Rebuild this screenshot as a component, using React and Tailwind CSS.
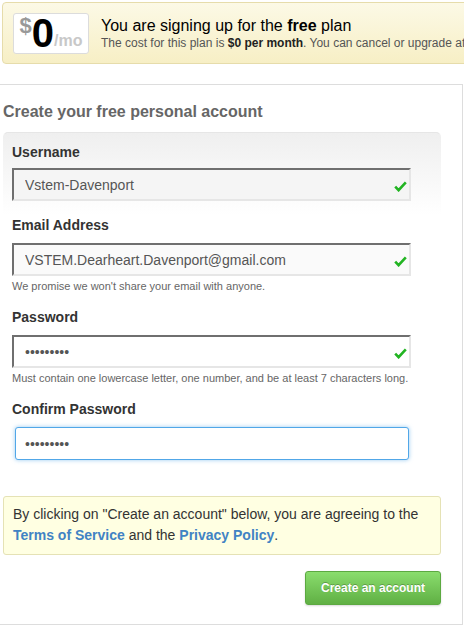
function Check() {
  return (
    <svg
      className="absolute right-[4px] top-[13px]"
      width="13"
      height="11"
      viewBox="0 0 13 11"
    >
      <path
        d="M1.2 5.6 L4.6 9.2 L11.8 1.4"
        fill="none"
        stroke="#22b422"
        strokeWidth="2.6"
        strokeLinejoin="miter"
      />
    </svg>
  );
}

function Field({ label, value, type = "text", hint, bg, className = "" }) {
  return (
    <div className={className}>
      <label className="block text-[14px] font-bold leading-[20px] text-[#333]">
        {label}
      </label>
      <div className="relative mt-[8px] w-[399px]">
        <input
          readOnly
          type={type}
          defaultValue={value}
          className={`block h-[33px] w-full border-2 border-t-[#6f6f6f] border-l-[#6f6f6f] border-r-[#e6e6e6] border-b-[#e6e6e6] ${bg} pl-[11px] text-[14px] text-[#555] outline-none`}
        />
        <Check />
      </div>
      {hint && (
        <p className="mt-[3px] text-[11px] leading-[14px] text-[#666]">{hint}</p>
      )}
    </div>
  );
}

export default function App() {
  return (
    <div className="h-[627px] w-[464px] overflow-hidden bg-white font-['Liberation_Sans',Arial,sans-serif]">
      <div className="ml-[2px] mt-[2px] flex h-[62px] w-[520px] items-center rounded-[4px] border border-[#e6dcab] bg-gradient-to-b from-[#fcf9e6] to-[#f7efc5] pl-[10px]">
        <div className="flex h-[41px] w-[76px] items-end justify-center rounded-[3px] border border-[#dcdcdc] bg-white pb-[4px] font-bold">
          <span className="mb-[12px] text-[22px] leading-none text-[#999]">$</span>
          <span className="text-[40px] leading-[32px] text-black">0</span>
          <span className="text-[16px] leading-none text-[#c8c8c8]">/mo</span>
        </div>
        <div className="ml-[12px]">
          <h2 className="text-[16px] leading-[20px] text-black">
            You are signing up for the <strong>free</strong> plan
          </h2>
          <p className="text-[12px] leading-[15px] text-[#555]">
            The cost for this plan is{" "}
            <strong className="text-[#222]">$0 per month</strong>. You can
            cancel or upgrade at any time.
          </p>
        </div>
      </div>

      <div className="mt-[20px] h-[541px] w-[463px] border-y border-r border-[#ddd] pl-[3px] pt-[17px]">
        <h1 className="text-[16px] font-bold leading-[20px] text-[#666]">
          Create your free personal account
        </h1>

        <div className="mt-[10px] w-[438px] rounded-t-[5px] border-x border-t border-x-transparent border-t-[#e6e6e6] bg-gradient-to-b from-[#efefef] to-white px-[8px] pb-[14px] pt-[9px]">
          <label className="block text-[14px] font-bold leading-[20px] text-[#333]">
            Username
          </label>
          <div className="relative mt-[6px] w-[399px]">
            <input
              readOnly
              defaultValue="Vstem-Davenport"
              className="block h-[33px] w-full border-2 border-t-[#6f6f6f] border-l-[#6f6f6f] border-r-[#e6e6e6] border-b-[#e6e6e6] bg-[#f5f5f5] pl-[11px] text-[14px] text-[#555] outline-none"
            />
            <Check />
          </div>
        </div>

        <div className="pl-[9px]">
          <Field
            label="Email Address"
            value="VSTEM.Dearheart.Davenport@gmail.com"
            bg="bg-[#fafafa]"
            hint="We promise we won't share your email with anyone."
          />
          <Field
            className="mt-[14px]"
            label="Password"
            type="password"
            value="123456789"
            bg="bg-white"
            hint="Must contain one lowercase letter, one number, and be at least 7 characters long."
          />
          <div className="mt-[14px]">
            <label className="block text-[14px] font-bold leading-[20px] text-[#333]">
              Confirm Password
            </label>
            <input
              readOnly
              type="password"
              defaultValue="123456789"
              className="ml-[3px] mt-[8px] block h-[33px] w-[394px] rounded-[3px] border border-[#51a7e8] bg-white pl-[9px] text-[14px] text-[#555] shadow-[0_0_4px_rgba(81,167,232,0.6)] outline-none"
            />
          </div>
        </div>

        <div className="mt-[36px] w-[438px] rounded-[3px] border border-[#e5e2b5] bg-[#ffffe2] px-[9px] pb-[8px] pt-[7px] text-[14px] leading-[21px] text-[#333]">
          By clicking on "Create an account" below, you are agreeing to the{" "}
          <a className="font-bold text-[#4183c4]">Terms of Service</a> and the{" "}
          <a className="font-bold text-[#4183c4]">Privacy Policy</a>.
        </div>

        <div className="mt-[16px] flex w-[438px] justify-end">
          <button className="h-[34px] w-[136px] rounded-[3px] border border-[#5ca941] bg-gradient-to-b from-[#8add6d] to-[#60b044] text-[12px] font-bold text-white shadow-[0_1px_2px_rgba(0,0,0,0.15)] [text-shadow:0_-1px_0_rgba(0,0,0,0.25)]">
            Create an account
          </button>
        </div>
      </div>
    </div>
  );
}
